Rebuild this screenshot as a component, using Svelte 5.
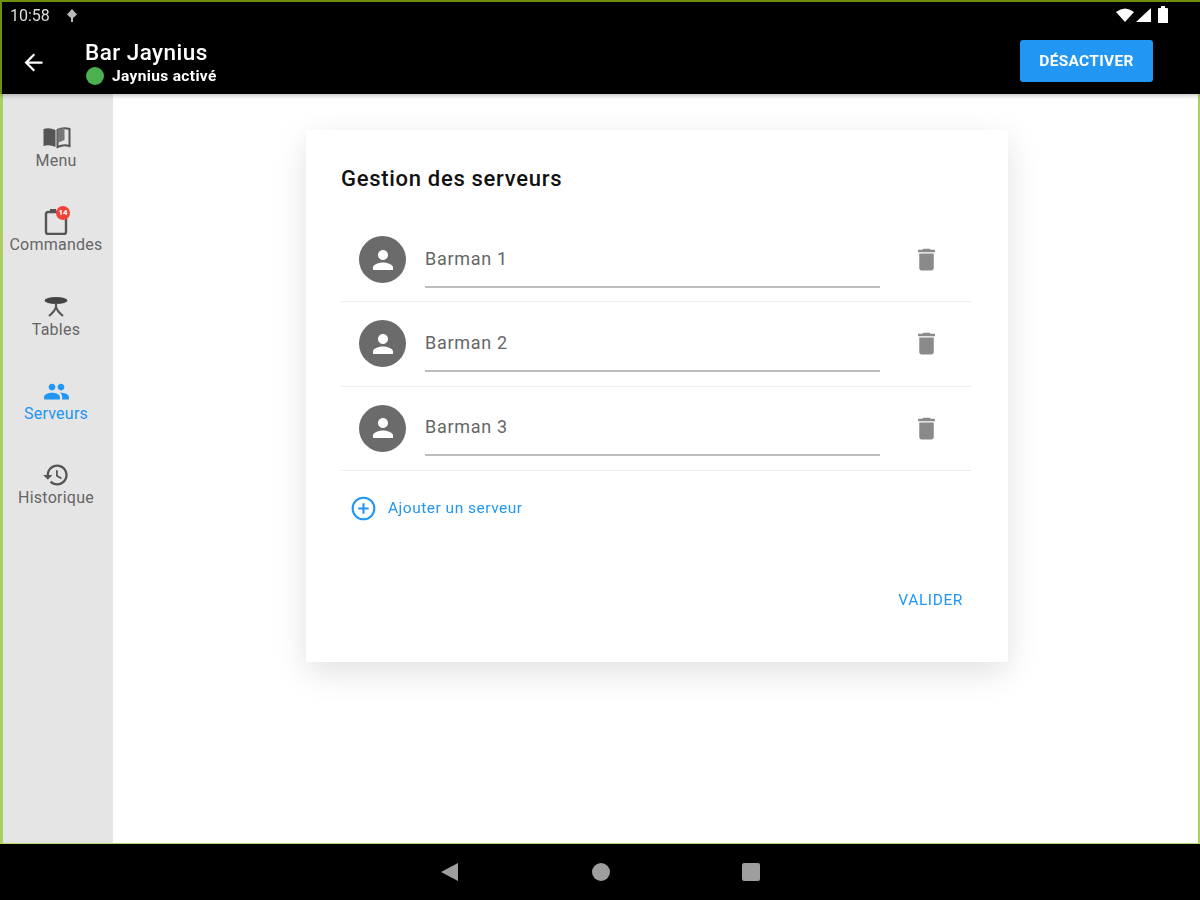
<script>
  const navItems = [
    { label: "Menu", icon: "menu" },
    { label: "Commandes", icon: "orders" },
    { label: "Tables", icon: "table" },
    { label: "Serveurs", icon: "people", active: true },
    { label: "Historique", icon: "history" }
  ];

  const servers = ["Barman 1", "Barman 2", "Barman 3"];
</script>

<div class="screen">
  <header class="top">
    <div class="status">
      <div class="status-left">
        <span class="time">10:58</span>
        <svg class="mic" viewBox="0 0 12 14" width="12" height="14">
          <path d="M6 1 11 6.5 6 11 1 6.5z" fill="#bbb" />
          <path d="M6 10v4" stroke="#bbb" stroke-width="2" />
        </svg>
      </div>
      <svg class="status-icons" viewBox="0 0 56 20" width="56" height="20">
        <path d="M1 7q9-7 18 0l-9 10z" fill="#fff" />
        <path d="M21 17 36 3v14z" fill="#fff" />
        <path d="M43 4q0-1 1-1h2V1h4v2h2q1 0 1 1v14H43z" fill="#fff" />
      </svg>
    </div>
    <div class="appbar">
      <svg class="back" viewBox="0 0 24 24" width="27" height="27">
        <path d="M20 11H7.83l5.59-5.59L12 4l-8 8 8 8 1.41-1.41L7.83 13H20v-2z" fill="#fff" />
      </svg>
      <div class="titles">
        <div class="title">Bar Jaynius</div>
        <div class="subtitle"><span class="dot"></span>Jaynius activé</div>
      </div>
      <button class="disable">DÉSACTIVER</button>
    </div>
  </header>

  <div class="body">
    <nav class="side">
      {#each navItems as item}
        <div class="nav-item" class:active={item.active}>
          <div class="nav-icon">
            {#if item.icon === "menu"}
              <svg viewBox="0 0 28 24" width="29" height="24">
                <path d="M1 3q6-2 12 1v17q-6-3-12-1z" fill="#555" />
                <path d="M15 4q6-3 12-1v17q-6-2-12 1z" fill="none" stroke="#555" stroke-width="2" />
                <path d="M15 4q3-2 7-2v12l-7 3z" fill="#777" />
              </svg>
            {:else if item.icon === "orders"}
              <svg viewBox="0 0 26 26" width="26" height="26">
                <path d="M5 3h16a2 2 0 0 1 2 2v18a2 2 0 0 1-2 2H5a2 2 0 0 1-2-2V5a2 2 0 0 1 2-2z" fill="none" stroke="#555" stroke-width="2.4" />
                <path d="M7 1h6" stroke="#555" stroke-width="2.4" />
              </svg>
              <span class="badge">14</span>
            {:else if item.icon === "table"}
              <svg viewBox="0 0 26 24" width="26" height="24">
                <ellipse cx="13" cy="5.5" rx="11.5" ry="3.5" fill="#444" />
                <path d="M13 8v5M13 12q-1 4-7 9M13 12q1 4 7 9" fill="none" stroke="#555" stroke-width="2.2" />
              </svg>
            {:else if item.icon === "people"}
              <svg viewBox="0 0 24 24" width="27" height="27">
                <path d="M16 11c1.66 0 2.99-1.34 2.99-3S17.66 5 16 5c-1.66 0-3 1.34-3 3s1.34 3 3 3zm-8 0c1.66 0 2.99-1.34 2.99-3S9.66 5 8 5C6.34 5 5 6.34 5 8s1.34 3 3 3zm0 2c-2.33 0-7 1.17-7 3.5V19h14v-2.5c0-2.33-4.67-3.5-7-3.5zm8 0c-.29 0-.62.02-.97.05 1.16.84 1.97 1.97 1.97 3.45V19h6v-2.5c0-2.33-4.67-3.5-7-3.5z" fill="#2196f3" />
              </svg>
            {:else}
              <svg viewBox="0 0 24 24" width="28" height="28">
                <path d="M13 3c-4.97 0-9 4.03-9 9H1l3.89 3.89.07.14L9 12H6c0-3.87 3.13-7 7-7s7 3.13 7 7-3.13 7-7 7c-1.93 0-3.68-.79-4.94-2.06l-1.42 1.42C8.27 19.99 10.51 21 13 21c4.97 0 9-4.03 9-9s-4.03-9-9-9zm-1 5v5l4.28 2.54.72-1.21-3.5-2.08V8H12z" fill="#555" />
              </svg>
            {/if}
          </div>
          <span class="nav-label">{item.label}</span>
        </div>
      {/each}
    </nav>

    <main class="main">
      <section class="card">
        <h2>Gestion des serveurs</h2>
        <ul class="rows">
          {#each servers as name}
            <li class="row">
              <div class="avatar">
                <svg viewBox="0 0 24 24" width="30" height="30">
                  <path d="M12 12c2.21 0 4-1.79 4-4s-1.79-4-4-4-4 1.79-4 4 1.79 4 4 4zm0 2c-2.67 0-8 1.34-8 4v2h16v-2c0-2.66-5.33-4-8-4z" fill="#fff" />
                </svg>
              </div>
              <div class="field">{name}</div>
              <svg class="trash" viewBox="0 0 24 24" width="29" height="29">
                <path d="M6 19c0 1.1.9 2 2 2h8c1.1 0 2-.9 2-2V7H6v12zM19 4h-3.5l-1-1h-5l-1 1H5v2h14V4z" fill="#8a8a8a" />
              </svg>
            </li>
          {/each}
        </ul>
        <div class="add">
          <svg viewBox="0 0 24 24" width="25" height="25">
            <circle cx="12" cy="12" r="10.4" fill="none" stroke="#2196f3" stroke-width="2" />
            <path d="M7 12h10M12 7v10" stroke="#2196f3" stroke-width="2" />
          </svg>
          <span>Ajouter un serveur</span>
        </div>
        <div class="actions">
          <span class="validate">VALIDER</span>
        </div>
      </section>
    </main>
  </div>

  <footer class="bottom">
    <svg viewBox="0 0 20 20" width="20" height="20">
      <path d="M1 10 18 1v18z" fill="#9e9e9e" />
    </svg>
    <span class="home"></span>
    <span class="recent"></span>
  </footer>
</div>

<style>
  :global(body) {
    font-family: Roboto, sans-serif;
    background: #fff;
  }

  .screen {
    width: 1200px;
    height: 900px;
    display: flex;
    flex-direction: column;
    overflow: hidden;
    filter: blur(0.7px);
  }

  .top {
    height: 92px;
    flex: none;
    background: #000;
    border-top: 2px solid #6f8f10;
    border-left: 2px solid #6f8f10;
    box-shadow: 0 2px 4px rgba(0, 0, 0, 0.22);
    z-index: 1;
    color: #fff;
  }

  .status {
    height: 26px;
    display: flex;
    align-items: center;
    justify-content: space-between;
    padding: 0 29px 0 8px;
  }

  .status-left {
    display: flex;
    align-items: center;
    gap: 16px;
  }

  .time {
    font-size: 16px;
    color: #ddd;
  }

  .appbar {
    height: 66px;
    display: flex;
    align-items: center;
    padding: 0 47px 0 18px;
  }

  .back {
    margin-right: 38px;
    margin-top: 2px;
  }

  .titles {
    flex: 1;
    padding-top: 2px;
  }

  .title {
    font-size: 22.5px;
    font-weight: 500;
    line-height: 26px;
    letter-spacing: 0.45px;
  }

  .subtitle {
    display: flex;
    align-items: center;
    gap: 8px;
    font-size: 15.5px;
    font-weight: 700;
    line-height: 20px;
    margin-top: 1px;
    letter-spacing: 0.35px;
  }

  .dot {
    width: 18px;
    height: 18px;
    margin-left: 1px;
    border-radius: 50%;
    background: #4caf50;
  }

  .disable {
    width: 133px;
    height: 42px;
    border: 0;
    border-radius: 3px;
    background: #2196f3;
    color: #fff;
    font: 700 15.5px Roboto, sans-serif;
    letter-spacing: 0.3px;
  }

  .body {
    flex: 1;
    min-height: 0;
    display: flex;
    border-left: 3px solid #a9d05f;
    border-right: 2px solid #a9d05f;
  }

  .side {
    width: 110px;
    flex: none;
    box-sizing: border-box;
    background: #e5e5e5;
    padding: 11px 4px 0 0;
  }

  .nav-item {
    height: 84.3px;
    display: flex;
    flex-direction: column;
    align-items: center;
    justify-content: center;
    color: #666;
  }

  .nav-item.active {
    color: #2196f3;
  }

  .nav-icon {
    position: relative;
    height: 28px;
    display: flex;
    align-items: center;
    justify-content: center;
  }

  .badge {
    position: absolute;
    top: -2px;
    right: -1px;
    width: 14px;
    height: 14px;
    border-radius: 50%;
    background: #f44336;
    color: #fff;
    font-size: 8px;
    font-weight: 700;
    line-height: 14px;
    text-align: center;
  }

  .nav-label {
    font-size: 16px;
    line-height: 18px;
    letter-spacing: 0.25px;
  }

  .main {
    flex: 1;
    display: flex;
    justify-content: center;
    align-items: flex-start;
    padding-top: 36px;
    background: #fff;
  }

  .card {
    width: 702px;
    height: 532px;
    box-sizing: border-box;
    padding: 34px 36px 0 35px;
    background: #fff;
    box-shadow: 0 10px 32px rgba(0, 0, 0, 0.12);
    border-radius: 2px;
    margin-left: 3px;
  }

  h2 {
    margin: 0;
    font-size: 22px;
    font-weight: 500;
    line-height: 30px;
    letter-spacing: 0.7px;
    color: #111;
  }

  .rows {
    list-style: none;
    margin: 24px 0 0;
    padding: 0;
  }

  .row {
    height: 84.3px;
    box-sizing: border-box;
    display: flex;
    align-items: center;
    padding: 0 31px 0 18px;
    border-bottom: 1px solid #eee;
  }

  .avatar {
    width: 47px;
    height: 47px;
    flex: none;
    border-radius: 50%;
    background: #6b6b6b;
    display: flex;
    align-items: center;
    justify-content: center;
  }

  .field {
    flex: 1;
    height: 50px;
    margin: 6px 32px 0 19px;
    box-sizing: border-box;
    padding-top: 9px;
    border-bottom: 2px solid #bdbdbd;
    font-size: 18px;
    line-height: 24px;
    letter-spacing: 0.7px;
    color: #666;
  }

  .trash {
    flex: none;
  }

  .add {
    display: flex;
    align-items: center;
    gap: 12px;
    margin: 25px 0 0 10px;
    color: #2196f3;
    font-size: 15.5px;
    letter-spacing: 0.5px;
  }

  .actions {
    display: flex;
    justify-content: flex-end;
    margin-top: 70px;
    padding-right: 9px;
  }

  .validate {
    color: #2196f3;
    font-size: 15.5px;
    font-weight: 400;
    letter-spacing: 0.6px;
  }

  .bottom {
    height: 57px;
    flex: none;
    background: #000;
    border-top: 1px solid #b5d56a;
    box-sizing: border-box;
    display: flex;
    align-items: center;
    justify-content: center;
    gap: 132px;
    padding: 0 1px 1px 0;
  }

  .home {
    width: 18px;
    height: 18px;
    border-radius: 50%;
    background: #9e9e9e;
  }

  .recent {
    width: 18px;
    height: 18px;
    border-radius: 2px;
    background: #9e9e9e;
  }
</style>
